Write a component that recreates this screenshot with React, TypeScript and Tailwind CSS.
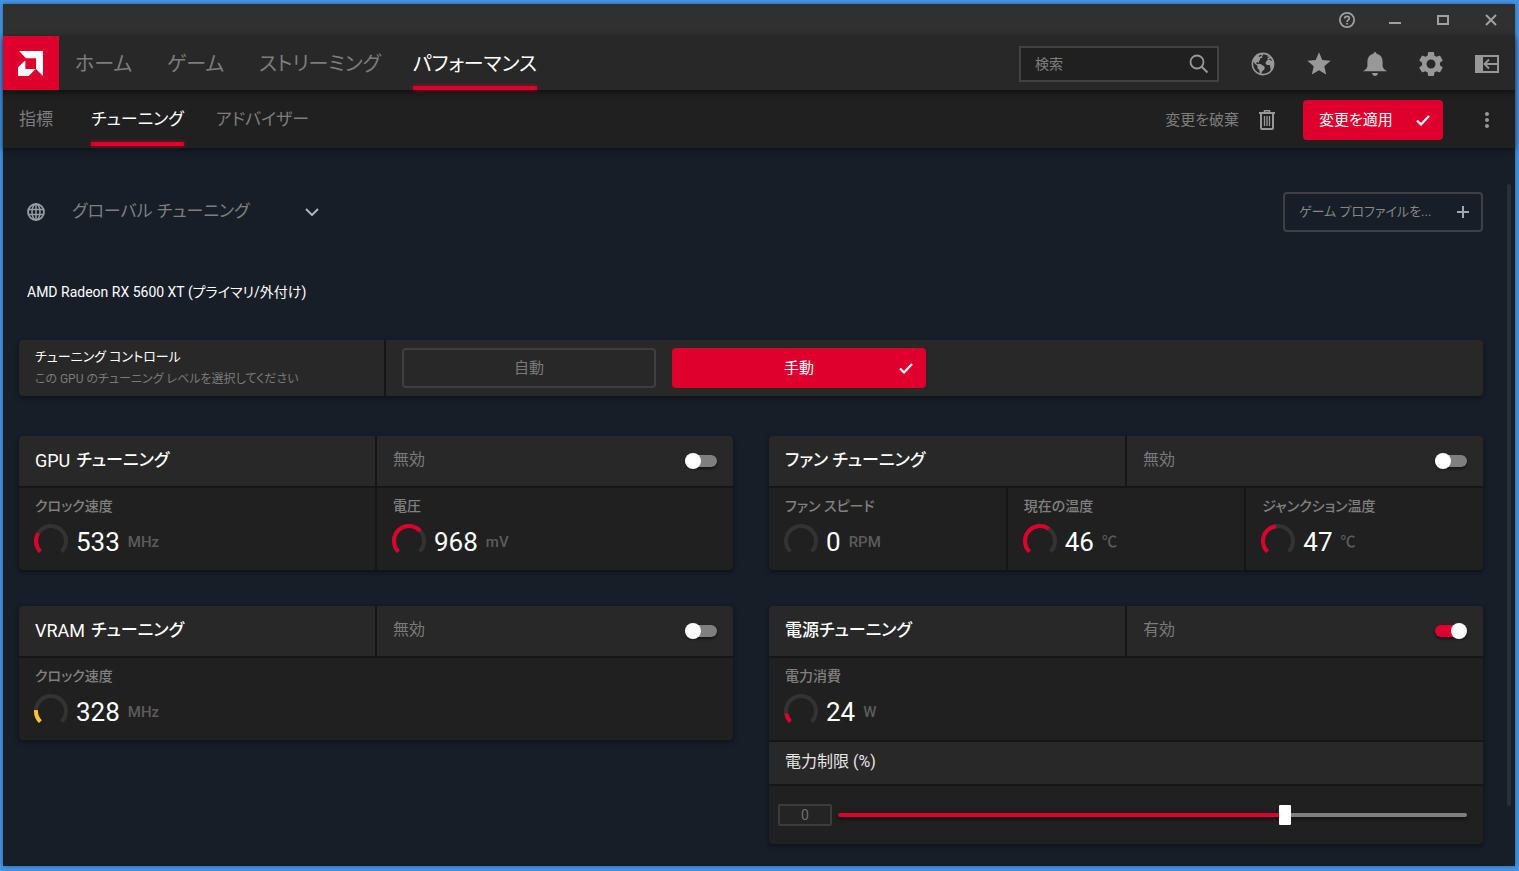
import { useId, useState, type ReactNode } from "react";
import { IoEarth } from "react-icons/io5";
import { MdMoreVert, MdSettings, MdStar } from "react-icons/md";

const RED = "#df002e";
const AMBER = "#ffc42e";

function LogoIcon() {
  return (
    <svg viewBox="0 0 75 75" className="size-[25px]" fill="#fff" aria-hidden="true">
      <path d="M3 0H75V75L54 54V22H24Z" />
      <path d="M22 28V54H53L32 75H0V49Z" />
    </svg>
  );
}

function HelpIcon() {
  return (
    <svg viewBox="0 0 16 16" className="size-4" fill="none" stroke="currentColor" aria-hidden="true">
      <circle cx="8" cy="8" r="7.1" strokeWidth="1.8" />
      <path d="M5.7 6.5Q5.7 4.3 8 4.3Q10.3 4.3 10.3 6.3Q10.3 7.4 9.2 8Q8 8.7 8 9.9" strokeWidth="1.7" />
      <path d="M7.1 10.9H8.9V12.6H7.1Z" fill="currentColor" stroke="none" />
    </svg>
  );
}

function CheckIcon() {
  return (
    <svg viewBox="0 0 16 16" className="size-4 justify-self-end" fill="none" stroke="currentColor" strokeWidth="2.2" aria-hidden="true">
      <path d="M2 8.5L6 12.5L14 4" />
    </svg>
  );
}

function SearchIcon() {
  return (
    <svg viewBox="0 0 20 20" className="size-5" fill="none" stroke="#989898" strokeWidth="1.8" aria-hidden="true">
      <circle cx="8" cy="8" r="6.5" />
      <path d="M12.5 12.5L18.5 18.5" strokeWidth="2" />
    </svg>
  );
}

function BellIcon() {
  return (
    <svg viewBox="0 0 24 24" className="size-6" fill="currentColor" aria-hidden="true">
      <path d="M12 0Q13.4 0 13.6 1.8Q19.6 3.2 19.6 10V14.5Q20 17 24 19.3H0Q4 17 4.4 14.5V10Q4.4 3.2 10.4 1.8Q10.6 0 12 0Z" />
      <path d="M9 21H15Q14.4 24 12 24Q9.6 24 9 21Z" />
    </svg>
  );
}

function TrashIcon() {
  return (
    <svg viewBox="0 0 24 24" className="size-6" fill="none" stroke="currentColor" aria-hidden="true">
      <path d="M4 5H20" strokeWidth="2" />
      <path d="M9.5 4.5V2.8H14.5V4.5" strokeWidth="1.6" />
      <path d="M6 6V20Q6 21 7 21H17Q18 21 18 20V6" strokeWidth="2" />
      <path d="M9.5 8V18M12 8V18M14.5 8V18" strokeWidth="1.3" />
    </svg>
  );
}

function DockIcon() {
  return (
    <svg viewBox="0 0 24 18" className="h-[18px] w-6" fill="none" stroke="currentColor" aria-hidden="true">
      <path d="M1 1H23V17H1Z" strokeWidth="2" />
      <path d="M0 0H8V18H0Z" fill="currentColor" stroke="none" />
      <path d="M22 9H9.5M14 4.5L9.5 9L14 13.5" strokeWidth="1.8" />
    </svg>
  );
}

function GridGlobeIcon() {
  return (
    <svg viewBox="0 0 18 18" className="size-[18px]" fill="none" stroke="currentColor" strokeWidth="1.5" aria-hidden="true">
      <circle cx="9" cy="9" r="8" strokeWidth="1.8" />
      <ellipse cx="9" cy="9" rx="4" ry="8" />
      <path d="M9 1V17M2 6.5H16M2 11.5H16" />
    </svg>
  );
}

function Gauge({ value, color }: { value: number; color: string }) {
  const arc = (share: number) => `${share * 75} 100`;
  return (
    <svg viewBox="0 0 34 34" className="size-[34px] shrink-0" fill="none" strokeWidth="4" aria-hidden="true">
      <g transform="rotate(135 17 17)">
        <circle cx="17" cy="17" r="15" stroke="#333333" pathLength={100} strokeDasharray={arc(1)} />
        {value > 0 && (
          <circle cx="17" cy="17" r="15" stroke={color} pathLength={100} strokeDasharray={arc(value)} />
        )}
      </g>
    </svg>
  );
}

type MetricProps = { label: string; value: string; unit: string; level: number; color?: string };

function Metric({ label, value, unit, level, color = RED }: MetricProps) {
  return (
    <div className="flex-1 bg-[#202020] pt-2 pr-4 pb-3 pl-[15px]">
      <div className="pl-px text-sm leading-5 font-medium text-[#808080]">{label}</div>
      <div className="mt-2 flex items-center gap-2">
        <Gauge value={level} color={color} />
        <span className="pt-0.5 text-[26px] leading-8 text-white">{value}</span>
        <span className="pt-0.5 text-[15px] leading-8 font-medium text-[#5c5c5c]">{unit}</span>
      </div>
    </div>
  );
}

type CardProps = { prefix?: string; title: string; enabled?: boolean; children: ReactNode };

function Card({ prefix, title, enabled = false, children }: CardProps) {
  const [on, setOn] = useState(enabled);
  const id = useId();
  return (
    <section className="flex flex-col gap-0.5 overflow-hidden rounded bg-[#161616] shadow-[0_2px_5px_rgba(0,0,0,0.45)]">
      <div className="flex h-[50px] gap-0.5">
        <h2 className="flex flex-1 items-center gap-1.5 bg-[#282828] px-4 text-[17px] font-medium text-white">
          {prefix && <span className="text-lg font-normal">{prefix}</span>}
          <span>{title}</span>
        </h2>
        <div className="flex flex-1 items-center justify-between bg-[#282828] px-4">
          <label htmlFor={id} className="pb-0.5 text-base text-[#7a7a7a]">
            {on ? "有効" : "無効"}
          </label>
          <input
            id={id}
            type="checkbox"
            role="switch"
            checked={on}
            onChange={(e) => setOn(e.target.checked)}
            className="relative h-3 w-8 cursor-pointer appearance-none rounded-full bg-[#7f7f7f] shadow-[0_2px_3px_rgba(0,0,0,0.5)] before:absolute before:-top-0.5 before:left-0 before:size-4 before:rounded-full before:bg-white before:content-[''] checked:bg-[#df002e] checked:before:left-4"
          />
        </div>
      </div>
      {children}
    </section>
  );
}

function PowerLimit() {
  const [limit, setLimit] = useState(0);
  const min = -50;
  const max = 20;
  const filled = ((limit - min) / (max - min)) * 100;
  return (
    <>
      <h3 className="flex h-[42px] items-center bg-[#282828] px-4 pb-0.5 text-base text-[#e6e6e6]">電力制限 (%)</h3>
      <div className="flex h-[58px] items-center bg-[#202020] pr-4 pl-[9px]">
        <input
          type="text"
          aria-label="電力制限"
          value={limit}
          onChange={(e) => setLimit(Math.min(max, Math.max(min, Number(e.target.value) || 0)))}
          className="h-[22px] w-[54px] rounded-xs border-2 border-[#3c3c3c] bg-[#242424] text-center text-sm leading-4 text-[#707070] outline-none"
        />
        <input
          type="range"
          aria-label="電力制限 (%)"
          min={min}
          max={max}
          value={limit}
          onChange={(e) => setLimit(Number(e.target.value))}
          style={{ backgroundImage: `linear-gradient(to right, ${RED} ${filled}%, #7f7f7f ${filled}%)` }}
          className="ml-1.5 h-1 min-w-0 flex-1 cursor-pointer appearance-none rounded-full shadow-[0_2px_4px_rgba(0,0,0,0.5)] [&::-webkit-slider-thumb]:h-5 [&::-webkit-slider-thumb]:w-3 [&::-webkit-slider-thumb]:appearance-none [&::-webkit-slider-thumb]:rounded-[1px] [&::-webkit-slider-thumb]:bg-white"
        />
      </div>
    </>
  );
}

const MAIN_TABS = ["ホーム", "ゲーム", "ストリーミング", "パフォーマンス"];
const SUB_TABS = ["指標", "チューニング", "アドバイザー"];

export default function App() {
  return (
    <div className="flex min-h-screen flex-col bg-[#4495e6] pt-1 pr-1 pb-[5px] pl-[3px] font-[Roboto,'Noto_Sans_CJK_JP',sans-serif] [font-feature-settings:'palt']">
      <div className="flex flex-1 flex-col bg-[#171e28] shadow-[0_0_5px_rgba(0,0,0,0.35)]">
        <div className="flex h-8 items-center justify-end gap-8 bg-[#303030] px-4 text-[#a0a0a0]">
          <button aria-label="ヘルプ">
            <HelpIcon />
          </button>
          <button aria-label="最小化">
            <svg viewBox="0 0 16 16" className="size-4" aria-hidden="true">
              <path d="M2 10H14V12H2Z" fill="currentColor" />
            </svg>
          </button>
          <button aria-label="最大化">
            <svg viewBox="0 0 16 16" className="size-4" aria-hidden="true">
              <path d="M3 4H13V12H3Z" fill="none" stroke="currentColor" strokeWidth="2" />
            </svg>
          </button>
          <button aria-label="閉じる">
            <svg viewBox="0 0 16 16" className="size-4" aria-hidden="true">
              <path d="M3 3L13 13M13 3L3 13" fill="none" stroke="currentColor" strokeWidth="2" />
            </svg>
          </button>
        </div>

        <header className="relative z-20 flex h-[54px] items-stretch bg-[#282828] pr-4 shadow-[0_2px_6px_rgba(0,0,0,0.6)]">
          <a href="#home" aria-label="AMD" className="flex w-14 items-center justify-center bg-[#df002e] pr-0.5">
            <LogoIcon />
          </a>
          <nav className="ml-4 flex gap-8 text-xl text-[#7d7d7d]">
            {MAIN_TABS.map((tab) =>
              tab === "パフォーマンス" ? (
                <a key={tab} href="#tab" aria-current="page" className="relative flex items-center pt-0.5 text-white">
                  {tab}
                  <span className="absolute inset-x-0 bottom-0 h-1 bg-[#df002e] shadow-[0_0_4px_rgba(223,0,46,0.7)]" />
                </a>
              ) : (
                <a key={tab} href="#tab" className="flex min-w-15 items-center pt-0.5">
                  {tab}
                </a>
              ),
            )}
          </nav>
          <div className="ml-auto flex items-center gap-8 pt-0.5 text-[#989898]">
            <label className="flex h-9 w-[200px] items-center border-2 border-[#424242] bg-[#202020] pr-2 pl-3.5">
              <input
                type="search"
                aria-label="検索"
                placeholder="検索"
                className="min-w-0 flex-1 bg-transparent text-sm outline-none placeholder:text-[#7f7f7f]"
              />
              <SearchIcon />
            </label>
            <button aria-label="ウェブ">
              <IoEarth className="-m-px size-[26px]" />
            </button>
            <button aria-label="お気に入り">
              <MdStar className="-m-0.5 size-7" />
            </button>
            <button aria-label="通知">
              <BellIcon />
            </button>
            <button aria-label="設定">
              <MdSettings className="-m-[3px] size-[30px]" />
            </button>
            <button aria-label="ドック">
              <DockIcon />
            </button>
          </div>
        </header>

        <div className="relative z-10 flex h-[58px] items-stretch bg-[#202020] pr-4 pl-4 shadow-[0_2px_6px_rgba(0,0,0,0.5)]">
          <nav className="flex gap-8 text-[17px] text-[#7d7d7d]">
            {SUB_TABS.map((tab) =>
              tab === "チューニング" ? (
                <a key={tab} href="#sub" aria-current="page" className="relative flex items-center pt-0.5 text-white">
                  {tab}
                  <span className="absolute inset-x-0 bottom-0.5 h-1 bg-[#df002e] shadow-[0_0_4px_rgba(223,0,46,0.7)]" />
                </a>
              ) : (
                <a key={tab} href="#sub" className="flex min-w-10 items-center pt-0.5">
                  {tab}
                </a>
              ),
            )}
          </nav>
          <div className="ml-auto flex items-center pt-0.5 text-[15px]">
            <button className="flex items-center gap-4 text-[#7d7d7d]">
              変更を破棄
              <span className="text-[#989898]">
                <TrashIcon />
              </span>
            </button>
            <button className="ml-6 flex h-10 w-[140px] items-center justify-between rounded bg-[#df002e] pr-3 pl-4 text-white">
              変更を適用
              <CheckIcon />
            </button>
            <button aria-label="メニュー" className="ml-8 text-[#989898]">
              <MdMoreVert className="size-6" />
            </button>
          </div>
        </div>

        <div className="flex flex-1">
          <main className="min-w-0 flex-1 pt-11 pr-6 pb-[22px] pl-4">
            <div className="flex items-center justify-between">
              <button className="flex h-10 items-center pl-2 text-[17px] text-[#7f7f7f]">
                <span className="text-[#989da3]">
                  <GridGlobeIcon />
                </span>
                <span className="w-[260px] pl-[27px] text-left">グローバル チューニング</span>
                <svg viewBox="0 0 14 8" className="h-2 w-3.5" fill="none" stroke="#b0b4b8" strokeWidth="2" aria-hidden="true">
                  <path d="M1 1L7 7L13 1" />
                </svg>
              </button>
              <button className="flex h-10 w-[200px] items-center justify-between rounded border-2 border-[#3f4041] pr-3 pl-3.5 text-[13px] text-[#85878a]">
                ゲーム プロファイルを...
                <svg viewBox="0 0 12 12" className="size-3" aria-hidden="true">
                  <path d="M5 0H7V5H12V7H7V12H5V7H0V5H5Z" fill="#a3a6aa" />
                </svg>
              </button>
            </div>

            <h1 className="mt-12 pl-2 text-sm leading-6 text-white">AMD Radeon RX 5600 XT (プライマリ/外付け)</h1>

            <section className="mt-9 flex h-14 gap-0.5 overflow-hidden rounded bg-[#161616] shadow-[0_2px_5px_rgba(0,0,0,0.45)]">
              <div className="flex w-[365px] flex-col justify-center gap-0.5 bg-[#282828] px-4">
                <h2 className="text-[13px] leading-5 text-white">チューニング コントロール</h2>
                <p className="text-xs leading-5 text-[#7a7a7a]">この GPU のチューニング レベルを選択してください</p>
              </div>
              <div className="flex flex-1 items-center gap-4 bg-[#282828] px-4">
                <button className="h-10 w-[254px] rounded border-2 border-[#3f3f3f] text-[15px] text-[#7a7a7a]">
                  自動
                </button>
                <button className="grid h-10 w-[254px] grid-cols-[1fr_auto_1fr] items-center rounded bg-[#df002e] px-3 text-[15px] text-white">
                  <span className="col-start-2">手動</span>
                  <CheckIcon />
                </button>
              </div>
            </section>

            <div className="mt-10 grid grid-cols-2 items-start gap-9">
              <Card prefix="GPU" title="チューニング">
                <div className="flex gap-0.5">
                  <Metric label="クロック速度" value="533" unit="MHz" level={0.28} />
                  <Metric label="電圧" value="968" unit="mV" level={0.68} />
                </div>
              </Card>
              <Card title="ファン チューニング">
                <div className="flex gap-0.5">
                  <Metric label="ファン スピード" value="0" unit="RPM" level={0} />
                  <Metric label="現在の温度" value="46" unit="℃" level={0.63} />
                  <Metric label="ジャンクション温度" value="47" unit="℃" level={0.47} />
                </div>
              </Card>
              <Card prefix="VRAM" title="チューニング">
                <Metric label="クロック速度" value="328" unit="MHz" level={0.18} color={AMBER} />
              </Card>
              <Card title="電源チューニング" enabled>
                <Metric label="電力消費" value="24" unit="W" level={0.13} />
                <PowerLimit />
              </Card>
            </div>
          </main>
          <div className="mt-9 mr-1 mb-[60px] w-1 rounded-full bg-[#28303a]" />
        </div>
      </div>
    </div>
  );
}
